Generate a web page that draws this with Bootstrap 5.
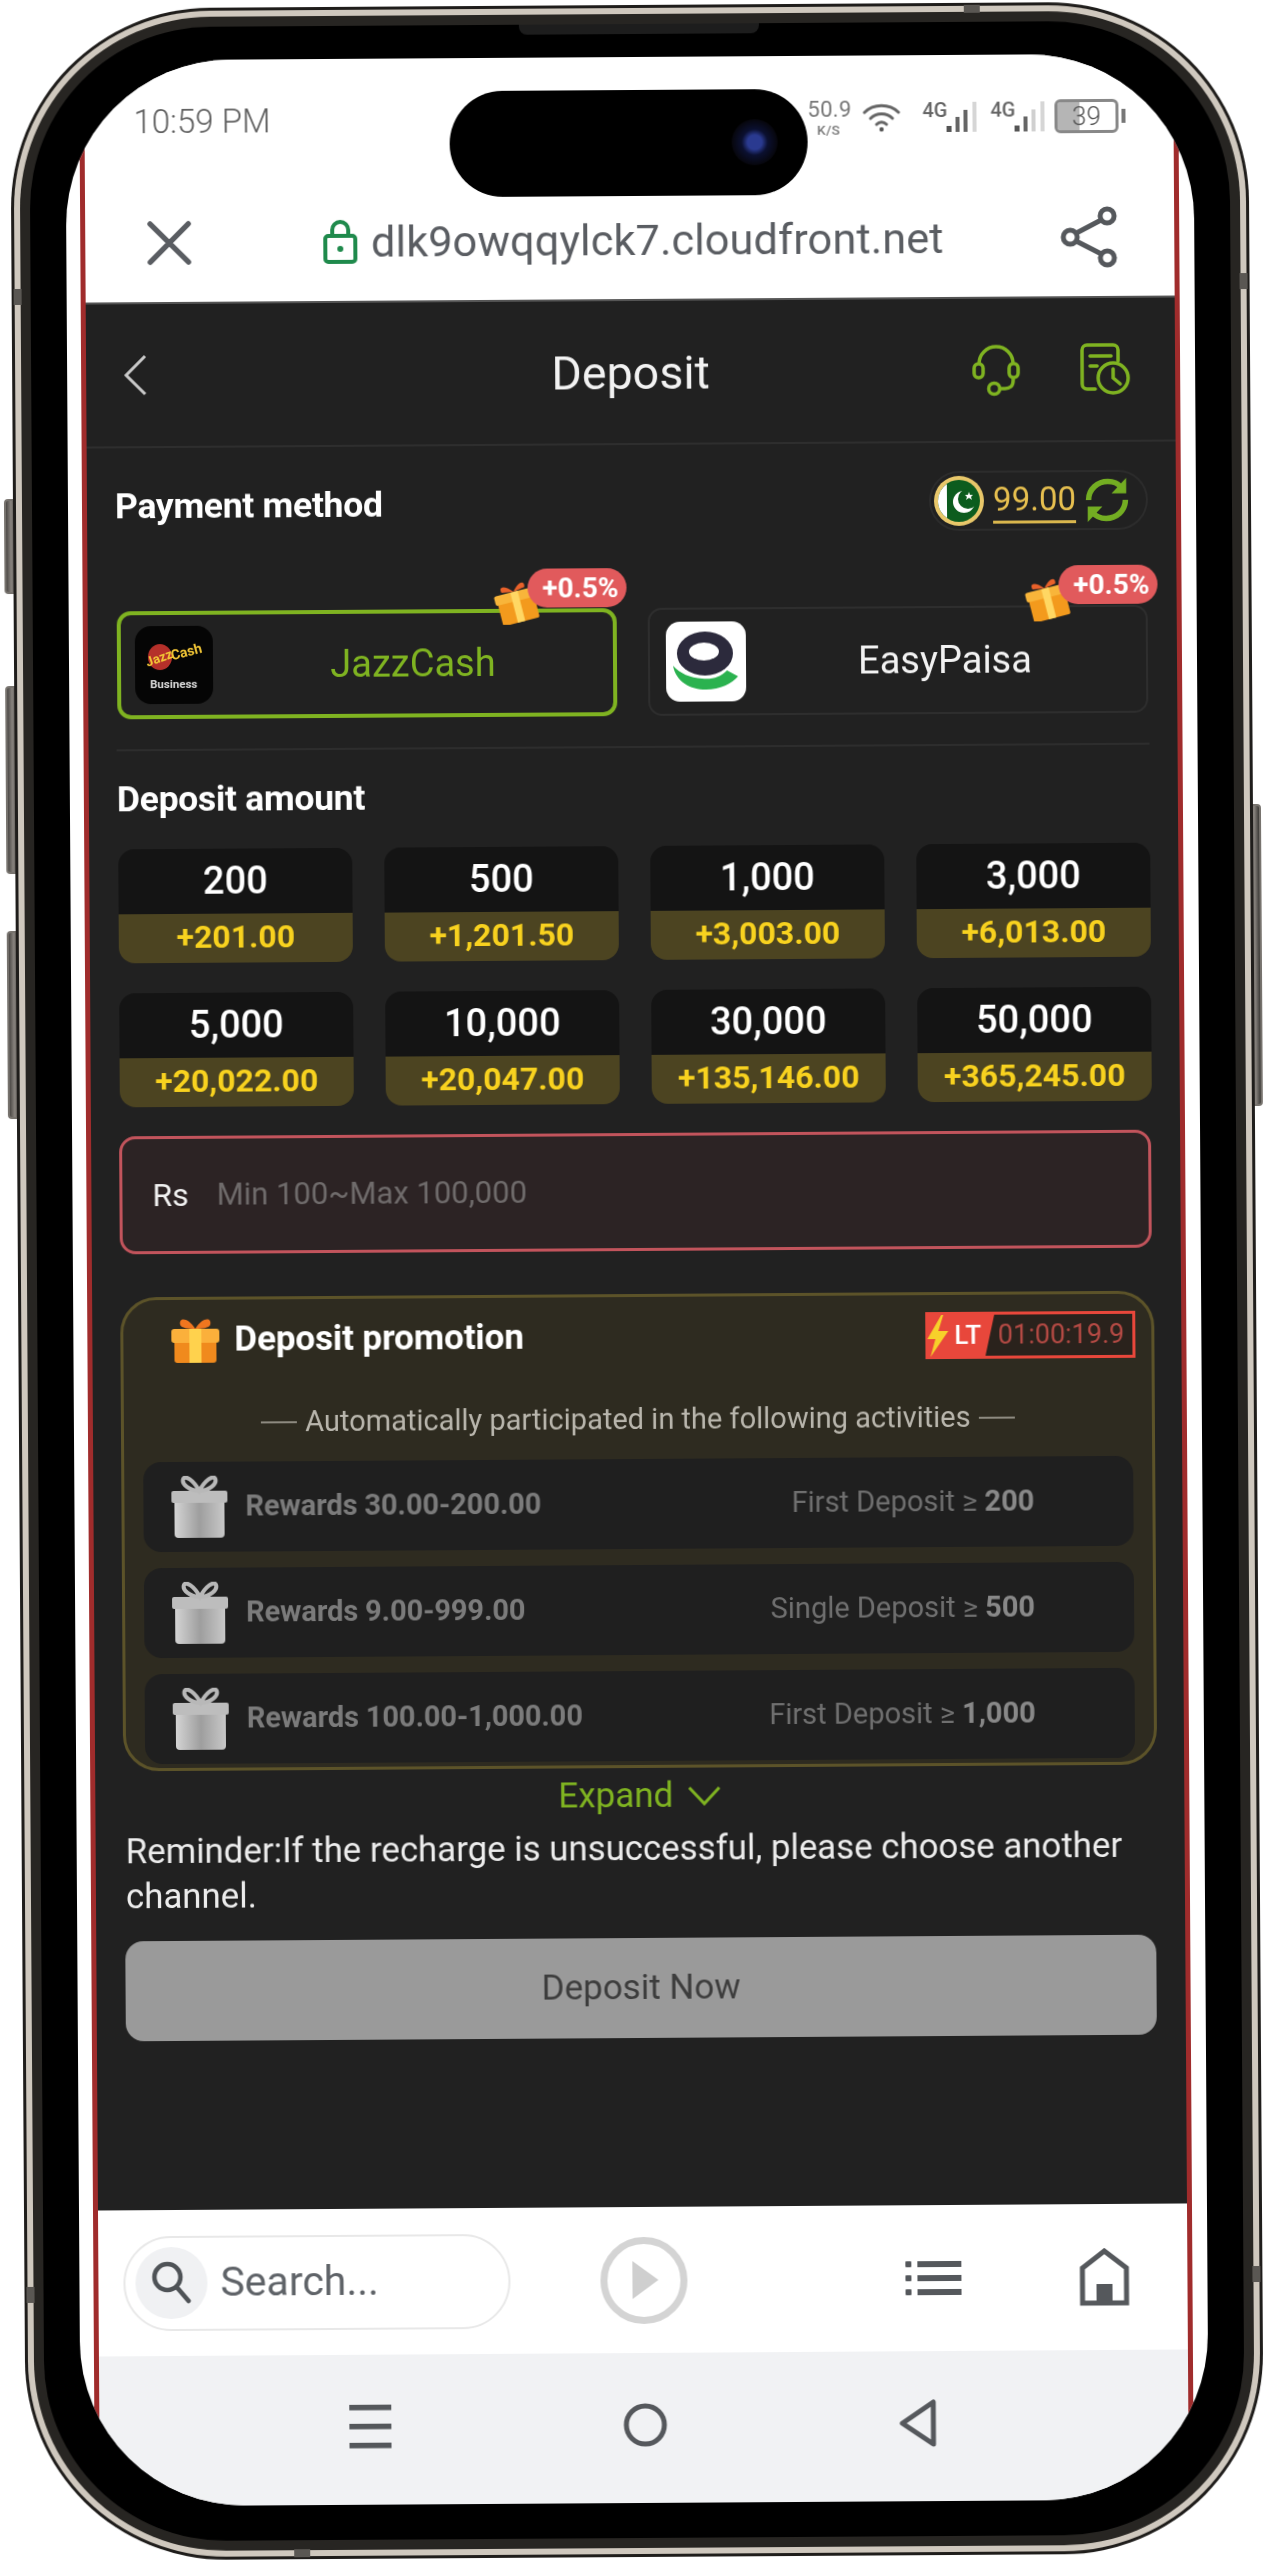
<!doctype html>
<html lang="en">
<head>
<meta charset="utf-8">
<title>Deposit</title>
<link href="https://cdn.jsdelivr.net/npm/bootstrap@5.3.0/dist/css/bootstrap.min.css" rel="stylesheet">
<style>
html,body{margin:0;height:2560px;background:#fff;overflow:hidden;font-family:Roboto,"Liberation Sans",sans-serif}
svg{display:block;flex:none}
.phone-wrap{width:1238px;height:2552px;margin:5px 0 0 18px;position:relative;transform:rotate(-.37deg);filter:blur(.5px)}
.side-btn{position:absolute;background:linear-gradient(90deg,#4a4744,#8a8580 50%,#3a3835);border:2px solid #77736e;border-radius:4px;width:14px}
.side-l1{left:-9px;top:490px;height:95px}
.side-l2{left:-9px;top:677px;height:188px}
.side-l3{left:-9px;top:922px;height:188px}
.side-r1{right:-8px;top:803px;height:302px}
.rim-a{height:100%;border-radius:200px;background:#1f1d1b;padding:3px;position:relative;z-index:1}
.rim-b{height:100%;border-radius:197px;background:#cfc8be;padding:6px}
.rim-c{height:100%;border-radius:191px;background:#272522;padding:10px}
.bezel{height:100%;border-radius:181px;background:#000;padding:33px 36px 35px;position:relative}
.band{position:absolute;background:#5a5753;z-index:3}
.band-1{left:2px;top:280px;width:8px;height:16px}
.band-2{right:2px;top:272px;width:8px;height:16px}
.band-3{left:2px;top:2278px;width:8px;height:16px}
.band-4{right:2px;top:2265px;width:8px;height:16px}
.band-5{left:268px;bottom:2px;width:16px;height:8px}
.band-6{right:268px;top:2px;width:16px;height:8px}
.speaker{position:absolute;left:490px;top:0;width:240px;height:10px;background:#1d1d1d;border-radius:0 0 8px 8px}
.island{position:absolute;left:420px;top:66px;width:358px;height:106px;border-radius:53px;background:#000;z-index:2}
.cam{position:absolute;right:30px;top:30px;width:46px;height:46px;border-radius:50%;background:radial-gradient(circle,#2a3a90 0 22%,#0b1030 40%,#07070f 68%,#000)}
.screen{height:100%;border-radius:165px;overflow:hidden;background:#fff;padding:0 15px 0 14px}
.shot{height:100%;display:flex;flex-direction:column;border-left:5px solid #a02c2c;border-right:5px solid #a02c2c}
.st-row{height:124px;flex:none;background:#fff;padding:0 48px 0 49px;color:#6a6a6a}
.st-time{font-size:33px;font-weight:300;color:#5f5f5f}
.st-speed{font-size:22px;line-height:25px;text-align:center;color:#777;width:42px;letter-spacing:.3px}
.st-speed span{display:block;font-size:13.5px;line-height:17px;font-weight:500}
.st-wifi{margin-left:13px}
.st-4g{font-size:20px;font-weight:500;color:#666;line-height:18px;margin-bottom:14px;margin-right:-3px;margin-left:22px}
.st-4g-b{margin-left:12px}
.st-batt{position:relative;width:64px;height:34px;border:3px solid #888;border-radius:6px;font-size:26px;line-height:28px;text-align:center;color:#555;font-weight:300;background:linear-gradient(90deg,#b5b5b5 0 38%,transparent 38%);background-clip:padding-box;margin-left:8px}
.st-nub{width:4px;height:14px;background:#777;margin-left:3px}
.url-row{height:120px;flex:none;background:#fff;padding:0 56px 0 62px;border-bottom:2px solid #555}
.url-text{font-size:43.3px;color:#5a5d62;letter-spacing:.1px;font-weight:400;margin-top:3px}
.url-mid{gap:13px;margin-left:14px}
.dark{flex:1 1 auto;min-height:0;background:#212121;display:flex;flex-direction:column;color:#fff}
.hdr{height:144px;flex:none;border-bottom:2px solid #2e2e2e;padding:0 44px 0 36px;position:relative}
.hdr-title{position:absolute;left:0;right:0;text-align:center;font-size:46.5px;line-height:1;color:#f2f2f2;top:49px}
.hdr-icons{gap:59px}
.body-pad{padding:28px 28px 0 28px;flex:1 1 auto;min-height:0}
.pm-title{font-size:35.5px;font-weight:700;letter-spacing:-.3px;margin-top:2px}
.bal-pill{height:60px;border:2px solid #2c2c2c;border-radius:30px;padding:0 16px 0 2px;gap:8px}
.bal-num{font-size:33px;color:#e6bf4f;border-bottom:3px solid #d9b64d;line-height:36px;padding:0 0 3px;margin-top:3px;font-weight:400}
.methods{display:grid;grid-template-columns:500px 500px;gap:31px;margin-top:75px;margin-left:1px}
.m-card{height:108px;border:2px solid #2e2e2e;border-radius:14px;padding:0 16px;position:relative;gap:0}
.m-on{border:4px solid #7fb321;padding:0 14px}
.m-name{flex:1 1 auto;text-align:center;font-size:38px;color:#f2f2f2;padding-left:14px}
.m-on .m-name{color:#7fb321}
.m-tag{position:absolute;right:-12px;top:-42px;width:99px;height:39px;border-radius:20px;background:#e15a5c;color:#fff;font-size:28px;font-weight:700;line-height:39px;text-align:right;padding-right:8px}
.m-on .m-tag{right:-14px;top:-44px}
.m-gift{position:absolute;right:75px;top:-31px}
.m-on .m-gift{right:73px;top:-33px}
.hr-soft{height:2px;background:#2d2d2d;margin:30px 0 0 0}
.da-title{font-size:35.5px;font-weight:700;letter-spacing:-.3px;line-height:40px;margin-top:28px}
.tiles{display:grid;grid-template-columns:repeat(4,234px);column-gap:32px;row-gap:30px;margin:30px 0 0 1px}
.tile{height:114px;border-radius:16px;overflow:hidden;display:flex;flex-direction:column;text-align:center}
.tile-a{height:65px;background:#141414;font-size:38px;font-weight:500;line-height:65px;color:#fff;flex:none}
.tile-b{flex:1;background:#4c4421;font-size:32px;font-weight:700;line-height:47px;color:#f8d21f}
.amt-box{height:118px;margin-top:29px;border:3px solid #c2545c;border-radius:16px;background:#2c2324;padding:0 0 0 30px;gap:28px;width:1032px}
.amt-rs{font-size:32px;color:#f0f0f0}
.amt-ph{font-size:31px;color:#6f6b6b}
.promo{height:474px;margin-top:43px;border:3px solid #5c5329;border-radius:36px;background:#2e2b20;padding:0 19px;overflow:hidden;width:1034px}
.promo-top{height:80px;padding:0 0 0 28px;gap:14px;position:relative}
.promo-title{font-size:35px;font-weight:700;color:#fff;letter-spacing:-.1px}
.lt{position:absolute;right:-3px;top:17px;width:210px;height:47px;background:#e8473b;display:flex;align-items:center;color:#fff}
.lt-txt{font-size:26px;font-weight:500;margin-left:5px;width:38px}
.lt-time{position:absolute;right:3px;top:3px;bottom:3px;width:147px;background:#2a221c;clip-path:polygon(9px 0,100% 0,100% 100%,0 100%);font-size:27px;text-align:right;padding-right:8px;line-height:41px;color:#b44a44}
.auto{height:82px;padding-top:3px;text-align:center;font-size:29px;color:#b9b6ad;justify-content:center;gap:8px}
.dash{width:36px;height:2px;background:#8d8a80}
.p-rows{display:flex;flex-direction:column;gap:16px}
.p-row{height:90px;flex:none;border-radius:18px;background:#1f1f1f;padding:0 99px 0 28px}
.p-left{gap:18px;font-size:29px;font-weight:700;color:#7b7b7b;letter-spacing:-.1px}
.p-right{font-size:29px;color:#6f6f6f;font-weight:400}
.p-right b{font-weight:700;color:#888}
.expand{margin-top:8px;gap:14px;color:#7fb321;font-size:35px;line-height:40px;justify-content:center}
.remind{margin:10px 0 0 2px;font-size:34.8px;line-height:45px;color:#ececec;width:1060px}
.dep-btn{height:100px;margin-top:22px;width:1031px;border-radius:18px;background:#9a9a9a;color:#3d3d3d;font-size:35px;border:0;margin-left:1px}
.bot{height:146px;flex:none;background:#fff;padding:0 58px 0 25px}
.srch{width:387px;height:95px;border:2px solid #e8e8e8;border-radius:48px;padding:0 0 0 10px;gap:13px;font-size:41px;color:#5f6368}
.srch-ic{width:72px;height:72px;border-radius:50%;background:#f0f1f3}
.play{width:87px;height:87px;margin-left:90px;border-radius:50%;border:7px solid #d4d4d4}
.bot-right{gap:118px}
.nav3{height:150px;flex:none;background:#f1f2f4}
.nav3-in{gap:232px;margin:0 2px 6px 0}
</style>
</head>
<body>
<div class="phone-wrap">
  <div class="side-btn side-l1"></div><div class="side-btn side-l2"></div><div class="side-btn side-l3"></div><div class="side-btn side-r1"></div>
  <div class="rim-a">
    <div class="band band-1"></div><div class="band band-2"></div><div class="band band-3"></div><div class="band band-4"></div><div class="band band-5"></div><div class="band band-6"></div>
    <div class="rim-b"><div class="rim-c"><div class="bezel">
      <div class="speaker"></div>
      <div class="island"><div class="cam"></div></div>
      <div class="screen"><div class="shot">

        <div class="st-row d-flex align-items-center justify-content-between">
          <div class="st-time">10:59 PM</div>
          <div class="d-flex align-items-center">
            <div class="st-speed">50.9<span>K/S</span></div>
            <svg class="st-wifi" width="38" height="30" viewBox="0 0 38 30" fill="none" stroke="#666" stroke-width="3" stroke-linecap="round"><path d="M2 10C11 1 27 1 36 10"/><path d="M8 16C14 10 24 10 30 16"/><path d="M14 22c3-3 7-3 10 0"/><circle cx="19" cy="27" r="2.2" fill="#555" stroke="none"/></svg>
            <div class="st-4g">4G</div>
            <svg width="34" height="32" viewBox="0 0 34 32"><rect x="2" y="25" width="5" height="6" fill="#555"/><rect x="11" y="16" width="4" height="15" fill="#666"/><rect x="19" y="9" width="4" height="22" fill="#666"/><rect x="28" y="1" width="4" height="30" fill="#d6d6d6"/></svg>
            <div class="st-4g st-4g-b">4G</div>
            <svg width="34" height="32" viewBox="0 0 34 32"><rect x="2" y="25" width="5" height="6" fill="#555"/><rect x="11" y="16" width="4" height="15" fill="#666"/><rect x="19" y="9" width="4" height="22" fill="#d0d0d0"/><rect x="28" y="1" width="4" height="30" fill="#d6d6d6"/></svg>
            <div class="st-batt">39</div><div class="st-nub"></div>
          </div>
        </div>

        <div class="url-row d-flex align-items-center justify-content-between">
          <svg width="44" height="44" viewBox="0 0 46 46" fill="none" stroke="#5a5d62" stroke-width="5.5" stroke-linecap="round"><path d="M3 3L43 43M43 3L3 43"/></svg>
          <div class="d-flex align-items-center url-mid">
            <svg width="36" height="46" viewBox="0 0 36 46" fill="none" stroke="#1f8a4c" stroke-width="4"><rect x="3" y="17" width="30" height="26" rx="3"/><path d="M10 17V11a8 8 0 0 1 16 0v6"/><circle cx="18" cy="30" r="3" fill="#1f8a4c" stroke="none"/></svg>
            <div class="url-text">dlk9owqqylck7.cloudfront.net</div>
          </div>
          <svg width="58" height="62" viewBox="0 0 58 62" fill="none" stroke="#55585c" stroke-width="5"><circle cx="10" cy="31" r="7"/><circle cx="47" cy="10" r="7"/><circle cx="47" cy="52" r="7"/><path d="M16 27L41 14M16 35L41 48"/></svg>
        </div>

        <div class="dark">
          <div class="hdr d-flex align-items-center justify-content-between">
            <svg width="26" height="42" viewBox="0 0 26 42" fill="none" stroke="#c9c9c9" stroke-width="3"><path d="M23 2L4 21L23 40"/></svg>
            <div class="hdr-title">Deposit</div>
            <div class="d-flex align-items-center hdr-icons">
              <svg width="48" height="54" viewBox="0 0 48 54" fill="none" stroke="#7fb321" stroke-width="3.5"><path d="M7 22V21a17 17 0 0 1 34 0v1"/><rect x="2" y="21" width="9" height="14" rx="4.5"/><rect x="37" y="21" width="9" height="14" rx="4.5"/><path d="M41 35v3c0 6-4 8-8 8H27"/><circle cx="22" cy="46" r="5.5"/></svg>
              <svg width="52" height="54" viewBox="0 0 52 54" fill="none" stroke="#7fb321" stroke-width="3.5" stroke-linecap="round"><path d="M16 47H8a5 5 0 0 1-5-5V8a5 5 0 0 1 5-5h26a5 5 0 0 1 5 5v11"/><path d="M11 14H32M11 24H18"/><circle cx="34" cy="36" r="15"/><path d="M34 27V36L41 42"/></svg>
            </div>
          </div>

          <div class="body-pad">
            <div class="d-flex align-items-center justify-content-between">
              <div class="pm-title">Payment method</div>
              <div class="bal-pill d-flex align-items-center">
                <svg width="52" height="52" viewBox="0 0 52 52"><circle cx="26" cy="26" r="25" fill="#e8c76a"/><circle cx="26" cy="26" r="21" fill="#0c5c1e"/><path d="M5 26A21 21 0 0 1 14 9V43A21 21 0 0 1 5 26Z" fill="#fff"/><circle cx="31" cy="27" r="11" fill="#fff"/><circle cx="35" cy="24" r="10" fill="#0c5c1e"/><path d="M36 17l1 3 3 0-2 2 1 3-3-2-3 2 1-3-2-2 3 0z" fill="#fff"/></svg>
                <div class="bal-num">99.00</div>
                <svg width="46" height="46" viewBox="0 0 50 50" fill="none" stroke="#73ad22" stroke-width="6"><path d="M5 25C5 13 15 5 26 5c6 0 11 2 14 6"/><path d="M45 25c0 12-10 20-21 20-6 0-11-2-14-6"/><path d="M46 1v17H30z" fill="#73ad22" stroke="none"/><path d="M4 49V32h16z" fill="#73ad22" stroke="none"/></svg>
              </div>
            </div>

            <div class="methods">
              <div class="m-card m-on d-flex align-items-center">
                <div class="m-gift"><svg width="46" height="45" viewBox="0 0 43 42"><g transform="rotate(-14 21 21)"><rect x="4" y="16" width="35" height="24" rx="2" fill="#f39a1d"/><rect x="2" y="11" width="39" height="9" rx="2" fill="#f8b53a"/><rect x="18" y="11" width="7" height="29" fill="#ffd763"/><path d="M21 11C14 2 8 3 10 9l11 2 11-2c2-6-4-7-11 2z" fill="#e9612a"/></g></svg></div>
                <div class="m-tag">+0.5%</div>
                <svg width="78" height="78" viewBox="0 0 78 78"><rect width="78" height="78" rx="16" fill="#050505"/><ellipse cx="25" cy="31" rx="12" ry="13" fill="#b5302a"/><text x="10" y="36" font-size="13" font-weight="700" fill="#f2c636" font-family="Roboto" transform="rotate(-20 25 31)">Jazz</text><text x="36" y="31" font-size="14" font-weight="700" fill="#f2c636" font-family="Roboto" transform="rotate(-14 50 28)">Cash</text><text x="15" y="62" font-size="11.5" font-weight="700" fill="#dcdcdc" font-family="Roboto">Business</text></svg>
                <div class="m-name">JazzCash</div>
              </div>
              <div class="m-card d-flex align-items-center">
                <div class="m-gift"><svg width="46" height="45" viewBox="0 0 43 42"><g transform="rotate(-14 21 21)"><rect x="4" y="16" width="35" height="24" rx="2" fill="#f39a1d"/><rect x="2" y="11" width="39" height="9" rx="2" fill="#f8b53a"/><rect x="18" y="11" width="7" height="29" fill="#ffd763"/><path d="M21 11C14 2 8 3 10 9l11 2 11-2c2-6-4-7-11 2z" fill="#e9612a"/></g></svg></div>
                <div class="m-tag">+0.5%</div>
                <svg width="80" height="80" viewBox="0 0 80 80"><rect width="80" height="80" rx="14" fill="#fff"/><ellipse cx="39" cy="32" rx="28" ry="22" fill="#2c2a3c"/><ellipse cx="38" cy="30" rx="15" ry="9" fill="#fff"/><path d="M7 44C10 60 24 68 40 68C54 68 66 62 72 55L61 49C54 56 46 58 36 57C24 56 14 52 7 44Z" fill="#2bb24f"/></svg>
                <div class="m-name">EasyPaisa</div>
              </div>
            </div>

            <div class="hr-soft"></div>
            <div class="da-title">Deposit amount</div>

            <div class="tiles">
              <div class="tile"><div class="tile-a">200</div><div class="tile-b">+201.00</div></div>
              <div class="tile"><div class="tile-a">500</div><div class="tile-b">+1,201.50</div></div>
              <div class="tile"><div class="tile-a">1,000</div><div class="tile-b">+3,003.00</div></div>
              <div class="tile"><div class="tile-a">3,000</div><div class="tile-b">+6,013.00</div></div>
              <div class="tile"><div class="tile-a">5,000</div><div class="tile-b">+20,022.00</div></div>
              <div class="tile"><div class="tile-a">10,000</div><div class="tile-b">+20,047.00</div></div>
              <div class="tile"><div class="tile-a">30,000</div><div class="tile-b">+135,146.00</div></div>
              <div class="tile"><div class="tile-a">50,000</div><div class="tile-b">+365,245.00</div></div>
            </div>

            <div class="amt-box d-flex align-items-center">
              <div class="amt-rs">Rs</div>
              <div class="amt-ph">Min 100~Max 100,000</div>
            </div>

            <div class="promo">
              <div class="promo-top d-flex align-items-center">
                <svg width="50" height="46" viewBox="0 0 50 46"><rect x="4" y="20" width="42" height="26" rx="3" fill="#f08a1d"/><rect x="1" y="12" width="48" height="14" rx="3" fill="#fbb03b"/><rect x="19" y="12" width="12" height="34" fill="#ffd24d"/><path d="M25 12C18 0 8 0 10 8c1 3 8 4 15 4c7 0 14-1 15-4C42 0 32 0 25 12Z" fill="#f0761f"/></svg>
                <div class="promo-title">Deposit promotion</div>
                <div class="lt">
                  <svg width="24" height="44" viewBox="0 0 24 44"><path d="M16 1L2 25h8L5 43L23 17H13L18 1z" fill="#f7d02a"/></svg>
                  <div class="lt-txt">LT</div>
                  <div class="lt-time">01:00:19.9</div>
                </div>
              </div>
              <div class="auto d-flex align-items-center"><span class="dash"></span>Automatically participated in the following activities<span class="dash"></span></div>
              <div class="p-rows">
                <div class="p-row d-flex align-items-center justify-content-between">
                  <div class="p-left d-flex align-items-center"><svg width="56" height="62" viewBox="0 0 56 62"><defs><linearGradient id="gg" x1="0" x2="1" y1="0" y2="0"><stop offset="0" stop-color="#d4d4d4"/><stop offset=".5" stop-color="#9e9e9e"/><stop offset="1" stop-color="#c8c8c8"/></linearGradient></defs><rect x="3" y="22" width="50" height="40" rx="4" fill="url(#gg)"/><rect x="0" y="15" width="56" height="12" rx="2" fill="#bdbdbd"/><path d="M28 15C22 4 14-1 12 3c-2 5 6 12 16 12c10 0 18-7 16-12c-2-4-10 1-16 12Z" fill="none" stroke="#b8b8b8" stroke-width="4"/></svg>Rewards 30.00-200.00</div>
                  <div class="p-right">First Deposit ≥ <b>200</b></div>
                </div>
                <div class="p-row d-flex align-items-center justify-content-between">
                  <div class="p-left d-flex align-items-center"><svg width="56" height="62" viewBox="0 0 56 62"><rect x="3" y="22" width="50" height="40" rx="4" fill="url(#gg)"/><rect x="0" y="15" width="56" height="12" rx="2" fill="#bdbdbd"/><path d="M28 15C22 4 14-1 12 3c-2 5 6 12 16 12c10 0 18-7 16-12c-2-4-10 1-16 12Z" fill="none" stroke="#b8b8b8" stroke-width="4"/></svg>Rewards 9.00-999.00</div>
                  <div class="p-right">Single Deposit ≥ <b>500</b></div>
                </div>
                <div class="p-row d-flex align-items-center justify-content-between">
                  <div class="p-left d-flex align-items-center"><svg width="56" height="62" viewBox="0 0 56 62"><rect x="3" y="22" width="50" height="40" rx="4" fill="url(#gg)"/><rect x="0" y="15" width="56" height="12" rx="2" fill="#bdbdbd"/><path d="M28 15C22 4 14-1 12 3c-2 5 6 12 16 12c10 0 18-7 16-12c-2-4-10 1-16 12Z" fill="none" stroke="#b8b8b8" stroke-width="4"/></svg>Rewards 100.00-1,000.00</div>
                  <div class="p-right">First Deposit ≥ <b>1,000</b></div>
                </div>
              </div>
            </div>

            <div class="expand d-flex align-items-center">Expand
              <svg width="34" height="22" viewBox="0 0 34 22" fill="none" stroke="#7fb321" stroke-width="3"><path d="M2 3L17 19L32 3"/></svg>
            </div>
            <div class="remind">Reminder:If the recharge is unsuccessful, please choose another channel.</div>
            <button type="button" class="btn dep-btn d-block">Deposit Now</button>
          </div>

          <div class="bot d-flex align-items-center">
            <div class="srch d-flex align-items-center">
              <div class="srch-ic d-flex align-items-center justify-content-center"><svg width="42" height="46" viewBox="0 0 42 46" fill="none" stroke="#4f5357" stroke-width="4.5" stroke-linecap="round"><circle cx="17" cy="17" r="13"/><path d="M27 28L38 41"/></svg></div>
              <div>Search...</div>
            </div>
            <div class="play d-flex align-items-center justify-content-center"><svg width="30" height="40" viewBox="0 0 30 40"><path d="M3 1L29 20L3 39Z" fill="#cfcfcf"/></svg></div>
            <div class="d-flex align-items-center bot-right ms-auto">
              <svg width="56" height="34" viewBox="0 0 56 34" fill="#55585c"><rect width="6" height="6" rx="1"/><rect y="14" width="6" height="6" rx="1"/><rect y="28" width="6" height="6" rx="1"/><rect x="12" width="44" height="6"/><rect x="12" y="14" width="44" height="6"/><rect x="12" y="28" width="44" height="6"/></svg>
              <svg width="50" height="58" viewBox="0 0 50 58" fill="none" stroke="#55585c" stroke-width="5"><path d="M3 55V20L25 3L47 20V55Z"/><rect x="17" y="36" width="16" height="20" fill="#55585c" stroke="none"/></svg>
            </div>
          </div>
        </div>

        <div class="nav3 d-flex align-items-center justify-content-center">
          <div class="nav3-in d-flex align-items-center">
            <svg width="42" height="44" viewBox="0 0 42 44" fill="#55585c"><rect width="42" height="5.5"/><rect y="19" width="42" height="5.5"/><rect y="38" width="42" height="5.5"/></svg>
            <svg width="44" height="44" viewBox="0 0 44 44" fill="none" stroke="#55585c" stroke-width="5"><circle cx="22" cy="22" r="19"/></svg>
            <svg width="38" height="48" viewBox="0 0 38 48" fill="none" stroke="#55585c" stroke-width="5" stroke-linejoin="round"><path d="M34 3V45L3 24Z"/></svg>
          </div>
        </div>

      </div></div>
    </div></div></div>
  </div>
</div>
<script src="https://cdn.jsdelivr.net/npm/bootstrap@5.3.0/dist/js/bootstrap.bundle.min.js"></script>
</body>
</html>
